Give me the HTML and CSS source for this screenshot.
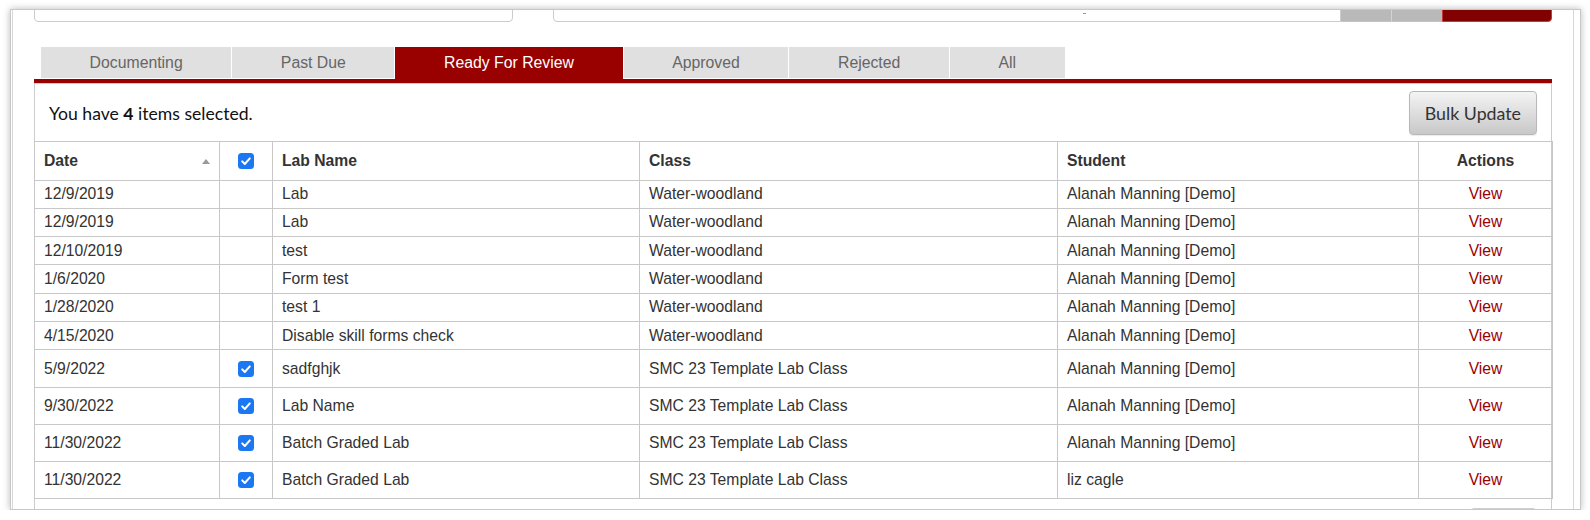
FILE: index.html
```html
<!DOCTYPE html>
<html>
<head>
<meta charset="utf-8">
<title>Ready For Review</title>
<link rel="stylesheet" href="styles.css">
</head>
<body>
<div class="window">
  <div class="page">
    <div class="filters">
      <div class="field field-left"></div>
      <div class="search">
        <div class="field field-search"><span class="tick"></span></div>
        <div class="sbtn sbtn-gray"></div>
        <div class="sbtn sbtn-gray sbtn-sep"></div>
        <div class="sbtn sbtn-red"></div>
      </div>
    </div>

    <div class="tabs">
      <div class="tab">Documenting</div>
      <div class="tab">Past Due</div>
      <div class="tab tab-active">Ready For Review</div>
      <div class="tab">Approved</div>
      <div class="tab">Rejected</div>
      <div class="tab">All</div>
    </div>
    <div class="tabbar"></div>

    <div class="panel">
      <div class="toolbar">
        <p class="selected">You have <b>4</b> items selected.</p>
        <button class="bulk">Bulk Update</button>
      </div>
      <table class="grid">
        <colgroup>
          <col class="c-date"><col class="c-check"><col class="c-lab"><col class="c-class"><col class="c-student"><col class="c-actions">
        </colgroup>
        <thead>
          <tr>
            <th>Date<span class="sort"></span></th>
            <th class="center"><span class="cb"><svg viewBox="0 0 16 16" width="16" height="16"><path d="M4.2 8.4l2.6 2.6 5-5.6" fill="none" stroke="#fff" stroke-width="2" stroke-linecap="round" stroke-linejoin="round"/></svg></span></th>
            <th>Lab Name</th>
            <th>Class</th>
            <th>Student</th>
            <th class="center">Actions</th>
          </tr>
        </thead>
        <tbody>
          <tr><td>12/9/2019</td><td></td><td>Lab</td><td>Water-woodland</td><td>Alanah Manning [Demo]</td><td class="center"><a class="view">View</a></td></tr>
          <tr><td>12/9/2019</td><td></td><td>Lab</td><td>Water-woodland</td><td>Alanah Manning [Demo]</td><td class="center"><a class="view">View</a></td></tr>
          <tr><td>12/10/2019</td><td></td><td>test</td><td>Water-woodland</td><td>Alanah Manning [Demo]</td><td class="center"><a class="view">View</a></td></tr>
          <tr><td>1/6/2020</td><td></td><td>Form test</td><td>Water-woodland</td><td>Alanah Manning [Demo]</td><td class="center"><a class="view">View</a></td></tr>
          <tr><td>1/28/2020</td><td></td><td>test 1</td><td>Water-woodland</td><td>Alanah Manning [Demo]</td><td class="center"><a class="view">View</a></td></tr>
          <tr><td>4/15/2020</td><td></td><td>Disable skill forms check</td><td>Water-woodland</td><td>Alanah Manning [Demo]</td><td class="center"><a class="view">View</a></td></tr>
          <tr class="sel-row"><td>5/9/2022</td><td class="center"><span class="cb"><svg viewBox="0 0 16 16" width="16" height="16"><path d="M4.2 8.4l2.6 2.6 5-5.6" fill="none" stroke="#fff" stroke-width="2" stroke-linecap="round" stroke-linejoin="round"/></svg></span></td><td>sadfghjk</td><td>SMC 23 Template Lab Class</td><td>Alanah Manning [Demo]</td><td class="center"><a class="view">View</a></td></tr>
          <tr class="sel-row"><td>9/30/2022</td><td class="center"><span class="cb"><svg viewBox="0 0 16 16" width="16" height="16"><path d="M4.2 8.4l2.6 2.6 5-5.6" fill="none" stroke="#fff" stroke-width="2" stroke-linecap="round" stroke-linejoin="round"/></svg></span></td><td>Lab Name</td><td>SMC 23 Template Lab Class</td><td>Alanah Manning [Demo]</td><td class="center"><a class="view">View</a></td></tr>
          <tr class="sel-row"><td>11/30/2022</td><td class="center"><span class="cb"><svg viewBox="0 0 16 16" width="16" height="16"><path d="M4.2 8.4l2.6 2.6 5-5.6" fill="none" stroke="#fff" stroke-width="2" stroke-linecap="round" stroke-linejoin="round"/></svg></span></td><td>Batch Graded Lab</td><td>SMC 23 Template Lab Class</td><td>Alanah Manning [Demo]</td><td class="center"><a class="view">View</a></td></tr>
          <tr class="sel-row"><td>11/30/2022</td><td class="center"><span class="cb"><svg viewBox="0 0 16 16" width="16" height="16"><path d="M4.2 8.4l2.6 2.6 5-5.6" fill="none" stroke="#fff" stroke-width="2" stroke-linecap="round" stroke-linejoin="round"/></svg></span></td><td>Batch Graded Lab</td><td>SMC 23 Template Lab Class</td><td>liz cagle</td><td class="center"><a class="view">View</a></td></tr>
        </tbody>
      </table>
      <div class="footer"><span class="pager"></span></div>
    </div>
  </div>
</div>
</body>
</html>
```

FILE: styles.css
```css
html, body {
  margin: 0;
  background: #fff;
}
body {
  padding: 9px 0 0 10px;
  font-family: "Liberation Sans", Arial, Helvetica, sans-serif;
  color: #333;
}

.window {
  width: 1571px;
  height: 501px;
  box-sizing: border-box;
  border: 1px solid #c8c8c8;
  box-shadow: 0 0 7px rgba(0, 0, 0, 0.28);
  overflow: hidden;
  padding: 0 6px 0 1px;
  background: #fff;
}

.page {
  margin-top: -24px;
  padding: 0 21px;
  border-left: 1px solid #d8d8d8;
  border-right: 1px solid #d8d8d8;
  min-height: 600px;
}

/* filter row */
.filters {
  display: flex;
  height: 36px;
}
.field {
  box-sizing: border-box;
  height: 36px;
  border: 1px solid #cccccc;
  background: #fff;
}
.field-left {
  width: 479px;
  border-radius: 4px;
}
.search {
  display: flex;
  flex: 1;
  margin-left: 40px;
}
.field-search {
  flex: 1;
  border-radius: 4px 0 0 4px;
  position: relative;
}
.tick {
  position: absolute;
  left: 529px;
  top: 26px;
  width: 3px;
  height: 1px;
  background: #999;
}
.sbtn {
  height: 36px;
  box-sizing: border-box;
}
.sbtn-gray {
  width: 50px;
  background: #b9b9b9;
  border-bottom: 1px solid #c4c4c4;
}
.sbtn-sep {
  width: 51px;
  border-left: 1px solid #d4d4d4;
}
.sbtn-red {
  width: 110px;
  background: #810000;
  border: 1px solid #c23a3a;
  border-radius: 0 4px 4px 0;
}

/* tabs */
.tabs {
  display: flex;
  align-items: flex-end;
  gap: 1px;
  margin: 25px 0 0 7px;
}
.tab {
  height: 31px;
  line-height: 31px;
  margin-bottom: 1px;
  padding: 0 48.6px;
  background: #e0e0e0;
  color: #666;
  font-size: 15.8px;
}
.tab-active {
  height: 32px;
  line-height: 31px;
  margin-bottom: 0;
  background: #990000;
  color: #fff;
}
.tabbar {
  height: 4px;
  background: #990000;
}

/* panel */
.panel {
  width: 1518px;
  box-sizing: border-box;
  border: 1px solid #cccccc;
  border-bottom: none;
}
.toolbar {
  display: flex;
  align-items: center;
  justify-content: space-between;
  box-sizing: border-box;
  height: 57px;
  padding: 1px 14px 0;
}
.selected {
  margin: 0;
  font-family: Lato, "Open Sans", sans-serif;
  font-size: 17.6px;
  color: #111;
}
.selected b {
  font-weight: 700;
}
.bulk {
  height: 44px;
  margin-top: 0;
  padding: 0 15px;
  box-sizing: border-box;
  border: 1px solid #b8b8b8;
  border-radius: 4px;
  background: linear-gradient(#f4f4f4, #c8c8c8);
  font-family: Lato, "Open Sans", sans-serif;
  font-size: 17.8px;
  color: #333;
  box-shadow: 0 1px 1px rgba(0,0,0,0.08);
}

/* table */
.grid {
  width: 1518px;
  margin-left: -1px;
  border-collapse: collapse;
  table-layout: fixed;
  font-size: 15.7px;
  color: #333;
}
.c-date { width: 185px; }
.c-check { width: 53px; }
.c-lab { width: 367px; }
.c-class { width: 418px; }
.c-student { width: 361px; }
.c-actions { width: 134px; }

.grid th,
.grid td {
  border: 1px solid #c8c8c8;
  padding: 3.66px 9px;
  line-height: 20px;
  text-align: left;
  white-space: nowrap;
  vertical-align: middle;
}
.grid th {
  padding-top: 8.75px;
  padding-bottom: 8.75px;
  font-weight: 700;
  color: #333;
}
.grid .sel-row td {
  padding-top: 8.4px;
  padding-bottom: 7.8px;
}
.grid .center {
  text-align: center;
}
.sort {
  float: right;
  width: 0;
  height: 0;
  margin-top: 8px;
  border-left: 4px solid transparent;
  border-right: 4px solid transparent;
  border-bottom: 5px solid #9a9a9a;
}
.cb {
  display: inline-block;
  width: 16px;
  height: 16px;
  vertical-align: middle;
  background: #1c78f2;
  border-radius: 3.5px;
  position: relative;
  top: -1px;
}
.cb svg {
  display: block;
}
.view {
  color: #990000;
  text-decoration: none;
}

/* footer */
.footer {
  display: flex;
  justify-content: flex-end;
  padding: 9px 14px 0;
}
.pager {
  width: 67px;
  height: 30px;
  box-sizing: border-box;
  border: 1px solid #d0d0d0;
  border-radius: 4px;
  background: #ececec;
}
```
